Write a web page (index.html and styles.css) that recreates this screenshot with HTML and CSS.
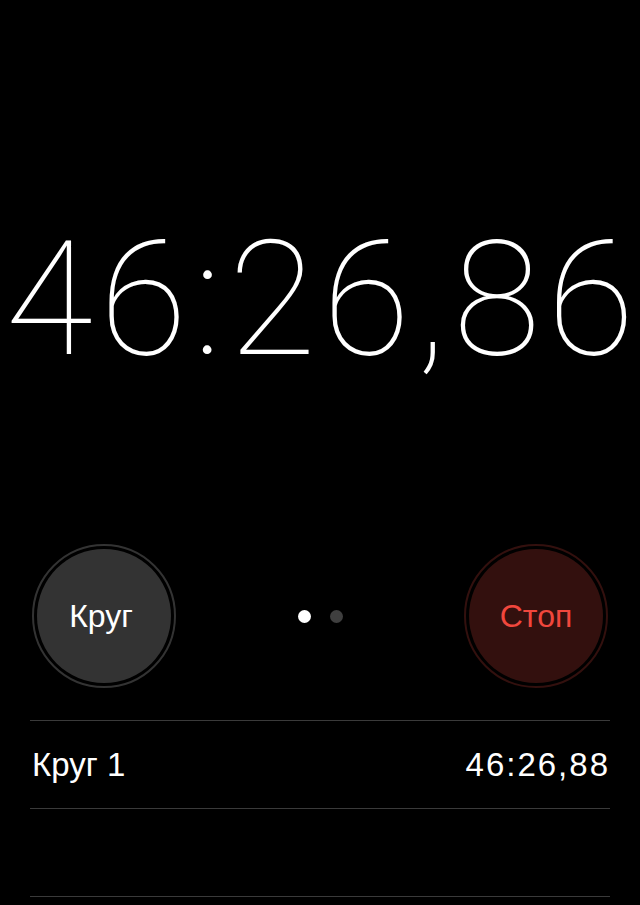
FILE: index.html
```html
<!DOCTYPE html>
<html lang="ru">
<head>
<meta charset="utf-8">
<title>Секундомер</title>
<link rel="stylesheet" href="styles.css">
</head>
<body>
<main class="stopwatch">
  <section class="display">
    <div class="time">46:26,86</div>
  </section>
  <section class="controls">
    <button class="round-btn lap-btn"><span class="round-face">Круг</span></button>
    <div class="pager">
      <span class="dot active"></span>
      <span class="dot"></span>
    </div>
    <button class="round-btn stop-btn"><span class="round-face">Стоп</span></button>
  </section>
  <ul class="laps">
    <li class="lap"><span class="lap-name">Круг 1</span><span class="lap-time">46:26,88</span></li>
    <li class="lap empty"></li>
  </ul>
</main>
</body>
</html>
```
FILE: styles.css
```css
html, body {
  margin: 0;
  padding: 0;
  background: #000;
}

body {
  width: 640px;
  height: 905px;
  overflow: hidden;
  color: #fff;
  font-family: "Liberation Sans", Arial, sans-serif;
}

.stopwatch {
  display: flex;
  flex-direction: column;
}

/* large running time */
.display {
  height: 544px;
  display: flex;
  justify-content: center;
  align-items: flex-start;
  padding-top: 220px;
  box-sizing: border-box;
}

.time {
  font-family: Roboto, "Noto Sans", sans-serif;
  font-weight: 100;
  font-size: 160px;
  line-height: 1;
  letter-spacing: 6.5px;
  margin-right: -6.5px;
  white-space: nowrap;
}

/* round buttons and page dots */
.controls {
  display: flex;
  justify-content: space-between;
  align-items: center;
  padding: 0 32px;
}

.round-btn {
  width: 144px;
  height: 144px;
  border-radius: 50%;
  padding: 3px;
  margin: 0;
  border: 2px solid;
  background: #000;
  box-sizing: border-box;
  display: flex;
  font: inherit;
}

.round-face {
  flex: 1;
  border-radius: 50%;
  display: flex;
  align-items: center;
  justify-content: center;
  font-size: 32px;
}

.lap-btn {
  border-color: #333;
}

.lap-btn .round-face {
  background: #333;
  color: #fff;
  padding-right: 6px;
}

.stop-btn {
  border-color: #33100e;
}

.stop-btn .round-face {
  background: #33100e;
  color: #f1473d;
}

.pager {
  display: flex;
  gap: 19px;
}

.dot {
  width: 13px;
  height: 13px;
  border-radius: 50%;
  background: #3f3f3f;
}

.dot.active {
  background: #fff;
}

/* lap list */
.laps {
  list-style: none;
  margin: 32px 30px 0;
  padding: 0;
}

.lap {
  height: 87px;
  border-top: 1px solid #3a3a3a;
  display: flex;
  justify-content: space-between;
  align-items: center;
  padding: 0 2px;
  font-size: 33px;
}

.lap-time {
  letter-spacing: 2px;
  margin-right: -2px;
}

.lap.empty {
  border-bottom: 1px solid #3a3a3a;
}
```
